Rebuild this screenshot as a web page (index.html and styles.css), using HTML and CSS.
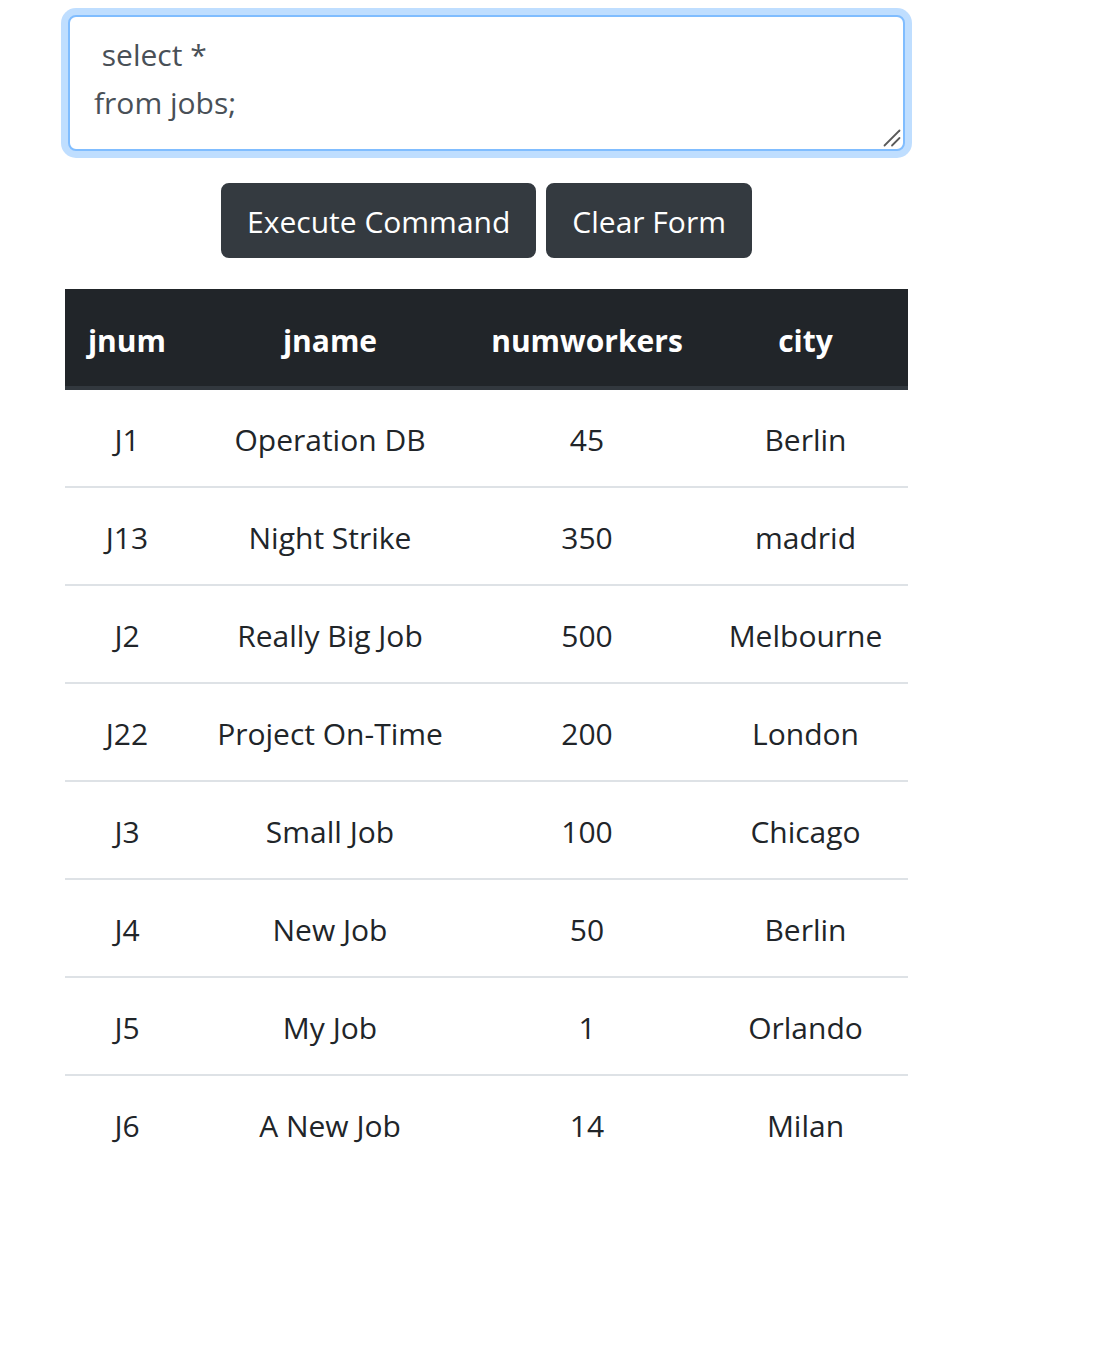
FILE: index.html
```html
<!DOCTYPE html>
<html>
<head>
<meta charset="utf-8">
<link rel="stylesheet" href="styles.css">
</head>
<body>
<main class="page">
  <form class="query-form">
    <div class="input-wrap">
      <textarea class="query-input" spellcheck="false"> select *
from jobs;</textarea>
      <svg class="grip" width="18" height="18" viewBox="0 0 18 18" aria-hidden="true">
        <line x1="1.5" y1="16.5" x2="16.5" y2="1.5" stroke="#5a5a5a" stroke-width="1.8" stroke-linecap="round"/>
        <line x1="9" y1="16.5" x2="16.5" y2="9" stroke="#5a5a5a" stroke-width="1.8" stroke-linecap="round"/>
      </svg>
    </div>
    <div class="actions">
      <button type="button" class="btn">Execute Command</button>
      <button type="button" class="btn">Clear Form</button>
    </div>
  </form>
  <table class="results">
    <colgroup>
      <col class="c1"><col class="c2"><col class="c3"><col class="c4">
    </colgroup>
    <thead>
      <tr><th>jnum</th><th>jname</th><th>numworkers</th><th>city</th></tr>
    </thead>
    <tbody>
      <tr><td>J1</td><td>Operation DB</td><td>45</td><td>Berlin</td></tr>
      <tr><td>J13</td><td>Night Strike</td><td>350</td><td>madrid</td></tr>
      <tr><td>J2</td><td>Really Big Job</td><td>500</td><td>Melbourne</td></tr>
      <tr><td>J22</td><td>Project On-Time</td><td>200</td><td>London</td></tr>
      <tr><td>J3</td><td>Small Job</td><td>100</td><td>Chicago</td></tr>
      <tr><td>J4</td><td>New Job</td><td>50</td><td>Berlin</td></tr>
      <tr><td>J5</td><td>My Job</td><td>1</td><td>Orlando</td></tr>
      <tr><td>J6</td><td>A New Job</td><td>14</td><td>Milan</td></tr>
    </tbody>
  </table>
</main>
</body>
</html>
```
FILE: styles.css
```css
* { box-sizing: border-box; }
html, body { margin: 0; padding: 0; background: #fff; }
body {
  font-family: "Open Sans", "Noto Sans", sans-serif;
  font-size: 30px;
  line-height: 48px;
  color: #212529;
}
.page {
  width: 843px;
  margin-left: 65px;
  padding-top: 15px;
  padding-bottom: 40px;
}
.query-form { margin: 0; }
.input-wrap {
  position: relative;
  margin: 0 3px;
}
.query-input {
  display: block;
  width: 100%;
  height: 136px;
  margin: 0;
  padding: 14px 24px 10px;
  font-family: inherit;
  font-size: 30px;
  line-height: 48px;
  color: #495057;
  background: #fff;
  border: 2px solid #80bdff;
  border-radius: 8px;
  box-shadow: 0 0 0 7px rgba(0, 123, 255, 0.25);
  outline: none;
  resize: none;
  overflow: hidden;
}
.grip {
  position: absolute;
  right: 4px;
  bottom: 4px;
  pointer-events: none;
}
.actions {
  display: flex;
  justify-content: center;
  gap: 10px;
  margin-top: 32px;
  margin-bottom: 31px;
}
.btn {
  font-family: inherit;
  font-size: 30px;
  line-height: 47px;
  padding: 13px 24px 11px;
  color: #fff;
  background: #343a40;
  border: 2px solid #343a40;
  border-radius: 8px;
  cursor: pointer;
}
.results {
  width: 843px;
  border-collapse: collapse;
  table-layout: fixed;
}
.c1 { width: 124px; }
.c2 { width: 282px; }
.c3 { width: 232px; }
.c4 { width: 205px; }
.results th, .results td {
  padding: 26px 0 22px;
  text-align: center;
  vertical-align: top;
  white-space: nowrap;
}
.results th {
  padding-top: 28px;
  padding-bottom: 21px;
  background: #212529;
  color: #fff;
  font-weight: 700;
  border-bottom: 4px solid #32383e;
}
.results td {
  color: #212529;
  border-top: 2px solid #dee2e6;
}
.results tbody tr:first-child td { border-top: none; }
```
